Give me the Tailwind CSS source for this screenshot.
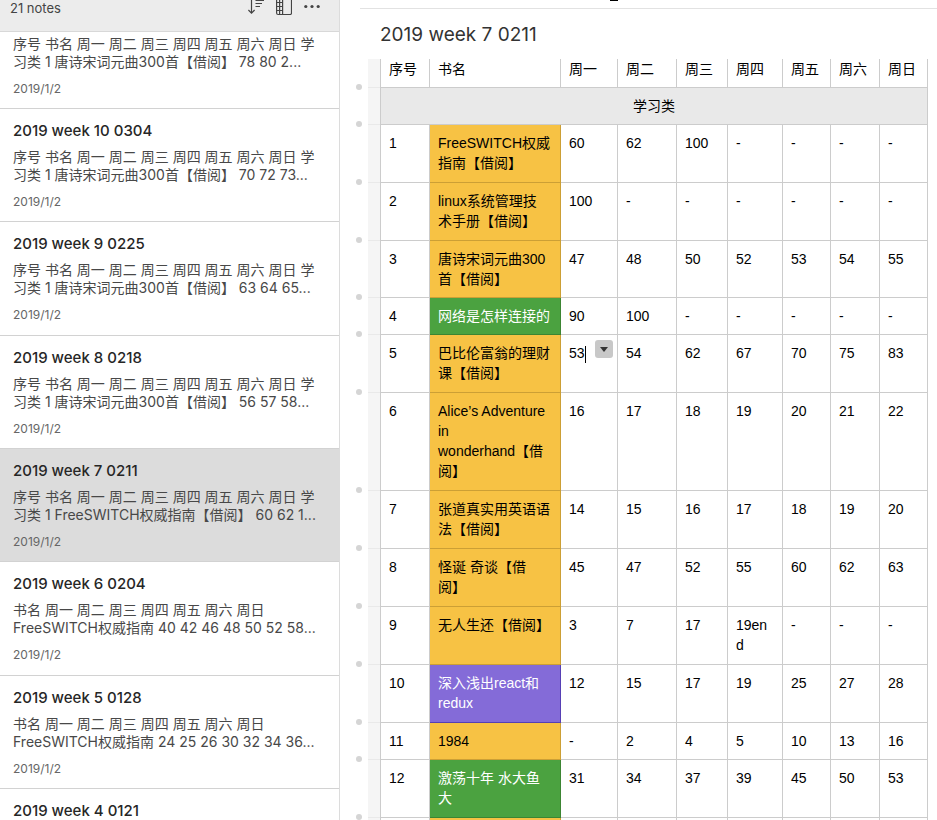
<!DOCTYPE html>
<html lang="zh-CN">
<head>
<meta charset="utf-8">
<meta name="viewport" content="width=device-width, initial-scale=1">
<title>2019 week 7 0211</title>
<script src="https://cdn.jsdelivr.net/npm/@tailwindcss/browser@4"></script>
</head>
<body class="flex h-screen overflow-hidden bg-white font-['Inter','Noto_Sans_CJK_SC',sans-serif] text-[#444]">

<aside class="flex w-[340px] shrink-0 flex-col overflow-hidden border-r border-[#dcdcdc]">
  <header class="flex h-8 shrink-0 items-start justify-between border-b border-[#d8d8d8] bg-[#ececec] pr-[19px] pl-[10px]">
    <span class="text-[13px] leading-4 text-[#444]">21 notes</span>
    <div class="flex gap-3">
      <button type="button" aria-label="Sort notes" class="h-4 w-4">
        <svg viewBox="0 0 16 16" class="h-4 w-4" fill="none" stroke="#444" stroke-width="1.2"><path d="M3.5 0V13M.4 10l3.1 3.2L6.6 10M7.5.5H16M7.5 3.5H14M7.5 6.5H12"/></svg>
      </button>
      <button type="button" aria-label="Change view" class="h-4 w-4">
        <svg viewBox="0 0 16 16" class="h-4 w-4" fill="none" stroke="#444" stroke-width="1.2"><path d="M.6 0V13a1.5 1.5 0 0 0 1.5 1.5H14a1.5 1.5 0 0 0 1.5-1.5V0M3.6 0V14.5M6.6 0V14.5M.6 2.5H6.6M.6 6.5H6.6M.6 10.5H6.6"/></svg>
      </button>
      <button type="button" aria-label="More actions" class="h-4 w-4">
        <svg viewBox="0 0 16 16" class="h-4 w-4" fill="#444"><circle cx="1.8" cy="6.5" r="1.6"/><circle cx="8" cy="6.5" r="1.6"/><circle cx="14.2" cy="6.5" r="1.6"/></svg>
      </button>
    </div>
  </header>
  <ul id="notes"></ul>
</aside>

<main class="flex min-w-0 flex-1 flex-col overflow-hidden pl-5">
  <div class="relative h-[9px] shrink-0 border-b border-[#e2e2e2]"><span class="absolute top-0 left-[250px] h-px w-2 bg-black"></span></div>
  <h1 class="shrink-0 px-5 pt-3 pb-[10px] text-[19px] leading-7 text-[#333]">2019 week 7 0211</h1>
  <div class="pr-[9px] pl-2">
    <table class="w-full table-fixed border-separate border-spacing-0 text-left font-['Liberation_Sans','Noto_Sans_CJK_SC',sans-serif] text-[14px] leading-5 text-black">
      <colgroup>
        <col class="w-3"><col class="w-[50px]"><col><col class="w-[57px]"><col class="w-[59px]"><col class="w-[51px]"><col class="w-[55px]"><col class="w-12"><col class="w-[49px]"><col class="w-12">
      </colgroup>
      <thead id="head"></thead>
      <tbody id="rows"></tbody>
    </table>
  </div>
</main>

<script>
const week = '序号 书名 周一 周二 周三 周四 周五 周六 周日 学<br>习类 1 ';
const notes = [
  ['', week + '唐诗宋词元曲300首【借阅】 78 80 2...'],
  ['2019 week 10 0304', week + '唐诗宋词元曲300首【借阅】 70 72 73...'],
  ['2019 week 9 0225', week + '唐诗宋词元曲300首【借阅】 63 64 65...'],
  ['2019 week 8 0218', week + '唐诗宋词元曲300首【借阅】 56 57 58...'],
  ['2019 week 7 0211', week + 'FreeSWITCH权威指南【借阅】 60 62 1...'],
  ['2019 week 6 0204', '书名 周一 周二 周三 周四 周五 周六 周日<br>FreeSWITCH权威指南 40 42 46 48 50 52 58...'],
  ['2019 week 5 0128', '书名 周一 周二 周三 周四 周五 周六 周日<br>FreeSWITCH权威指南 24 25 26 30 32 34 36...'],
  ['2019 week 4 0121', '']
];
document.getElementById('notes').innerHTML = notes.map(([title, text], i) => `
  <li class="border-b border-[#d2d2d2] px-[13px] whitespace-nowrap ${i === 0 ? 'pt-[3px]' : 'pt-[13px]'} ${i % 3 === 2 ? 'pb-[11px]' : 'pb-[10px]'} ${i === 4 ? 'bg-[#dcdcdc]' : ''}">
    ${title ? `<h2 class="mb-2 text-[15px] leading-[18px] font-medium text-[#262626]">${title}</h2>` : ''}
    ${text ? `<p class="text-[14px] leading-[18px] text-[#484848]">${text}</p>
    <p class="mt-[9px] text-[12px] leading-[18px] text-[#666]">2019/1/2</p>` : ''}
  </li>`).join('');

const gutter = '<td class="relative border-b border-[#e9e9e9] bg-[#f5f5f5] p-0"><span class="absolute -bottom-[3px] -left-3 h-1.5 w-1.5 rounded-full bg-[#d5d5d5]"></span></td>';
const edge = 'border-l';
document.getElementById('head').innerHTML = `<tr class="h-7">${gutter}${['序号','书名','周一','周二','周三','周四','周五','周六','周日'].map((t, i) =>
  `<th scope="col" class="border-r border-b border-[#ccc] px-2 pb-2 align-top font-normal ${i ? '' : edge}">${t}</th>`).join('')}</tr>`;

const amber = 'bg-[#f7c244] border-[#cc9f35] text-black';
const green = 'bg-[#4ba240] border-[#3c8533] text-white';
const violet = 'bg-[#846bd8] border-[#5640b5] text-white';
const two = 'h-[58px]', one = 'h-[37px]', four = 'h-[98px]';
const rows = [
  [two, amber, 'FreeSWITCH权威<br>指南【借阅】', '60 62 100 - - - -'],
  [two, amber, 'linux系统管理技<br>术手册【借阅】', '100 - - - - - -'],
  ['h-[57px]', amber, '唐诗宋词元曲300<br>首【借阅】', '47 48 50 52 53 54 55'],
  [one, green, '网络是怎样连接的', '90 100 - - - - -'],
  [two, amber, '巴比伦富翁的理财<br>课【借阅】', '53 54 62 67 70 75 83'],
  [four, amber, 'Alice’s Adventure<br>in<br>wonderhand【借<br>阅】', '16 17 18 19 20 21 22'],
  [two, amber, '张道真实用英语语<br>法【借阅】', '14 15 16 17 18 19 20'],
  [two, amber, '怪诞 奇谈【借<br>阅】', '45 47 52 55 60 62 63'],
  [two, amber, '无人生还【借阅】', '3 7 17 19en<br>d - - -'],
  [two, violet, '深入浅出react和<br>redux', '12 15 17 19 25 27 28'],
  [one, amber, '1984', '- 2 4 5 10 13 16'],
  [two, green, '激荡十年 水大鱼<br>大', '31 34 37 39 45 50 53'],
  [two, amber, '', '      ']
];
const editing = '53<span class="inline-block h-[17px] w-px bg-black align-middle"></span><button type="button" aria-label="Cell options" class="absolute top-[5px] right-1 flex h-[18px] w-[18px] items-center justify-center rounded-[3px] bg-[#c8c8c8]"><svg viewBox="0 0 8 5" class="h-[5px] w-2" fill="#333"><path d="M0 0h8L4 5z"/></svg></button>';
document.getElementById('rows').innerHTML =
  `<tr class="h-[37px]">${gutter}<th colspan="9" scope="colgroup" class="border-x border-b border-[#ccc] bg-[#e9e9e9] px-2 py-0 text-center font-normal">学习类</th></tr>` +
  rows.map(([height, color, name, values], r) => `<tr class="${height}">${gutter}
    <td class="border-x border-b border-[#ccc] px-2 pt-2 align-top">${name ? r + 1 : ''}</td>
    <td class="border-r border-b px-2 pt-2 align-top whitespace-nowrap ${color}">${name}</td>
    ${values.split(' ').map((v, c) => `<td class="relative border-r border-b border-[#ccc] px-2 pt-2 align-top">${r === 4 && c === 0 ? editing : v}</td>`).join('')}</tr>`).join('');
</script>
</body>
</html>
